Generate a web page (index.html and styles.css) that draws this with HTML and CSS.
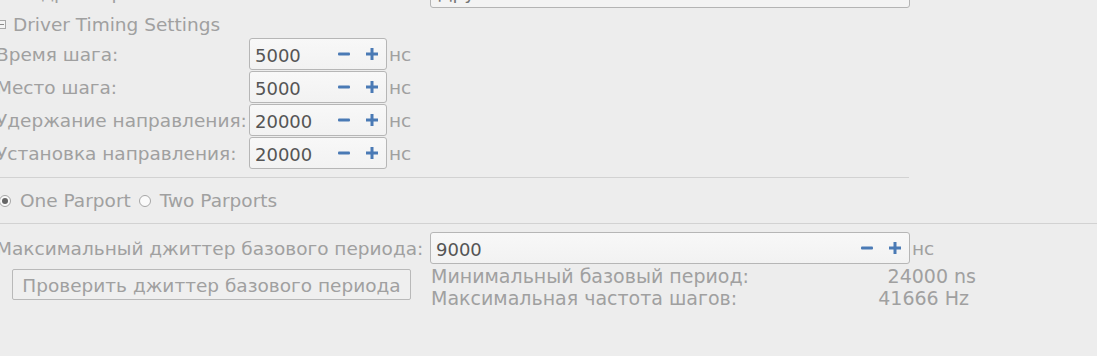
FILE: index.html
```html
<!DOCTYPE html>
<html lang="ru">
<head>
    <meta charset="UTF-8">
    <title>Driver Timing Settings</title>
    <link rel="stylesheet" href="styles.css">
</head>
<body>

    <div class="page">

        <div class="top-row">
            <span class="label">Тип драйвера:</span>
            <div class="combo"><span class="combo-text">Другой</span></div>
        </div>

        <div class="group-title">
            <span class="tree-box"></span>Driver Timing Settings
        </div>

        <div class="timing">
            <span class="label">Время шага:</span>
            <div class="spin"><span class="spin-value">5000</span><span class="spin-btns"><svg class="ico" viewBox="0 0 12 12"><rect x="0" y="4.5" width="12" height="3" rx="1"/></svg><svg class="ico" viewBox="0 0 12 12"><path d="M4.5 0h3v4.5H12v3H7.5V12h-3V7.5H0v-3h4.5z"/></svg></span></div>
            <span class="unit">нс</span>

            <span class="label">Место шага:</span>
            <div class="spin"><span class="spin-value">5000</span><span class="spin-btns"><svg class="ico" viewBox="0 0 12 12"><rect x="0" y="4.5" width="12" height="3" rx="1"/></svg><svg class="ico" viewBox="0 0 12 12"><path d="M4.5 0h3v4.5H12v3H7.5V12h-3V7.5H0v-3h4.5z"/></svg></span></div>
            <span class="unit">нс</span>

            <span class="label">Удержание направления:</span>
            <div class="spin"><span class="spin-value">20000</span><span class="spin-btns"><svg class="ico" viewBox="0 0 12 12"><rect x="0" y="4.5" width="12" height="3" rx="1"/></svg><svg class="ico" viewBox="0 0 12 12"><path d="M4.5 0h3v4.5H12v3H7.5V12h-3V7.5H0v-3h4.5z"/></svg></span></div>
            <span class="unit">нс</span>

            <span class="label">Установка направления:</span>
            <div class="spin"><span class="spin-value">20000</span><span class="spin-btns"><svg class="ico" viewBox="0 0 12 12"><rect x="0" y="4.5" width="12" height="3" rx="1"/></svg><svg class="ico" viewBox="0 0 12 12"><path d="M4.5 0h3v4.5H12v3H7.5V12h-3V7.5H0v-3h4.5z"/></svg></span></div>
            <span class="unit">нс</span>
        </div>

        <div class="separator short"></div>

        <div class="radios">
            <span class="radio checked"></span><span class="radio-text">One Parport</span>
            <span class="radio"></span><span class="radio-text">Two Parports</span>
        </div>

        <div class="separator"></div>

        <div class="jitter">
            <span class="label">Максимальный джиттер базового периода:</span>
            <div class="spin wide"><span class="spin-value">9000</span><span class="spin-btns"><svg class="ico" viewBox="0 0 12 12"><rect x="0" y="4.5" width="12" height="3" rx="1"/></svg><svg class="ico" viewBox="0 0 12 12"><path d="M4.5 0h3v4.5H12v3H7.5V12h-3V7.5H0v-3h4.5z"/></svg></span></div>
            <span class="unit">нс</span>

            <div class="test-cell">
                <div class="button">Проверить джиттер базового периода</div>
            </div>
            <div class="info">
                <span class="label">Минимальный базовый период:</span>
                <span class="value first">24000 ns</span>
                <span class="label">Максимальная частота шагов:</span>
                <span class="value">41666 Hz</span>
            </div>
        </div>

    </div>

</body>
</html>
```

FILE: styles.css
```css
/* Base */
html, body {
    margin: 0;
    padding: 0;
    height: 100%;
    background: #ededed;
    overflow: hidden;
}

body {
    font-family: "DejaVu Sans", sans-serif;
    font-size: 18.5px;
    color: #a0a0a0;
}

/* Whole form is scrolled a little to the left */
.page {
    margin-left: -4px;
    width: 1101px;
}

.label {
    white-space: nowrap;
    line-height: 22px;
    padding-top: 2px;
}

/* Cut-off row at the top */
.top-row {
    display: grid;
    grid-template-columns: 434px 480px;
    align-items: center;
    height: 32px;
    margin-top: -24px;
}

.top-row .label {
    padding-left: 4px;
}

.combo {
    height: 30px;
    border: 1px solid #b4b4b4;
    border-radius: 3px;
    background: #f3f3f3;
    display: flex;
    align-items: center;
    padding-left: 7px;
    color: #777;
}

/* Group header */
.group-title {
    display: flex;
    align-items: center;
    height: 30px;
    padding-top: 3px;
    box-sizing: border-box;
}

.tree-box {
    width: 9px;
    height: 9px;
    border: 1px solid #a8a8a8;
    margin-left: 1px;
    margin-right: 7px;
    position: relative;
    box-sizing: border-box;
    background: #f4f4f4;
}

.tree-box::after {
    content: "";
    position: absolute;
    left: 1px;
    right: 1px;
    top: 3px;
    height: 1px;
    background: #8a8a8a;
}

/* Timing rows */
.timing {
    display: grid;
    grid-template-columns: 253px 138px auto;
    grid-auto-rows: 32px;
    row-gap: 1px;
    align-items: center;
}

.unit {
    padding-left: 2px;
    padding-top: 2px;
    line-height: 22px;
}

/* Spin box */
.spin {
    height: 32px;
    box-sizing: border-box;
    border: 1px solid #b6b6b6;
    border-radius: 3px;
    background: linear-gradient(#f8f8f8, #f2f2f2);
    display: flex;
    align-items: center;
    padding: 2px 8px 0 5px;
    color: #555;
    font-size: 18px;
}

.spin-value {
    flex: 1;
}

.spin-btns {
    display: flex;
    gap: 16px;
    align-items: center;
    margin-top: -2px;
}

.ico {
    width: 12px;
    height: 12px;
    fill: #4a7ab5;
}

/* Separators */
.separator {
    height: 1px;
    background: #d2d2d2;
}

.separator.short {
    width: 913px;
    margin-top: 8px;
}

/* Radio buttons */
.radios {
    display: flex;
    align-items: center;
    height: 45px;
}

.radio {
    width: 12px;
    height: 12px;
    border: 1px solid #a6a6a6;
    border-radius: 50%;
    box-sizing: border-box;
    background: #fafafa;
    margin-right: 9px;
    position: relative;
}

.radio + .radio-text + .radio {
    margin-left: 8px;
}

.radio.checked {
    margin-left: 3px;
}

.radio.checked::after {
    content: "";
    position: absolute;
    left: 2px;
    top: 2px;
    width: 6px;
    height: 6px;
    border-radius: 50%;
    background: #666;
}

.radio-text {
    line-height: 22px;
    padding-top: 1px;
}

/* Jitter section */
.jitter {
    display: grid;
    grid-template-columns: 434px 480px auto;
    align-items: center;
    margin-top: 8px;
}

.test-cell {
    padding: 5px 0 0 16px;
    align-self: start;
}

.button {
    width: 399px;
    height: 31px;
    box-sizing: border-box;
    border: 1px solid #b9b9b9;
    border-radius: 2px;
    background: #efefef;
    display: flex;
    align-items: center;
    justify-content: center;
    white-space: nowrap;
    padding-top: 1px;
}

.info {
    grid-column: 2 / 4;
    display: grid;
    grid-template-columns: 320px 225px;
    line-height: 22px;
    padding: 1px 0 0 1px;
    align-self: start;
    font-size: 19px;
}

.info .label {
    padding-top: 0;
}

.value {
    text-align: right;
    white-space: nowrap;
    padding-right: 7px;
}

.value.first {
    padding-right: 0;
}
```
